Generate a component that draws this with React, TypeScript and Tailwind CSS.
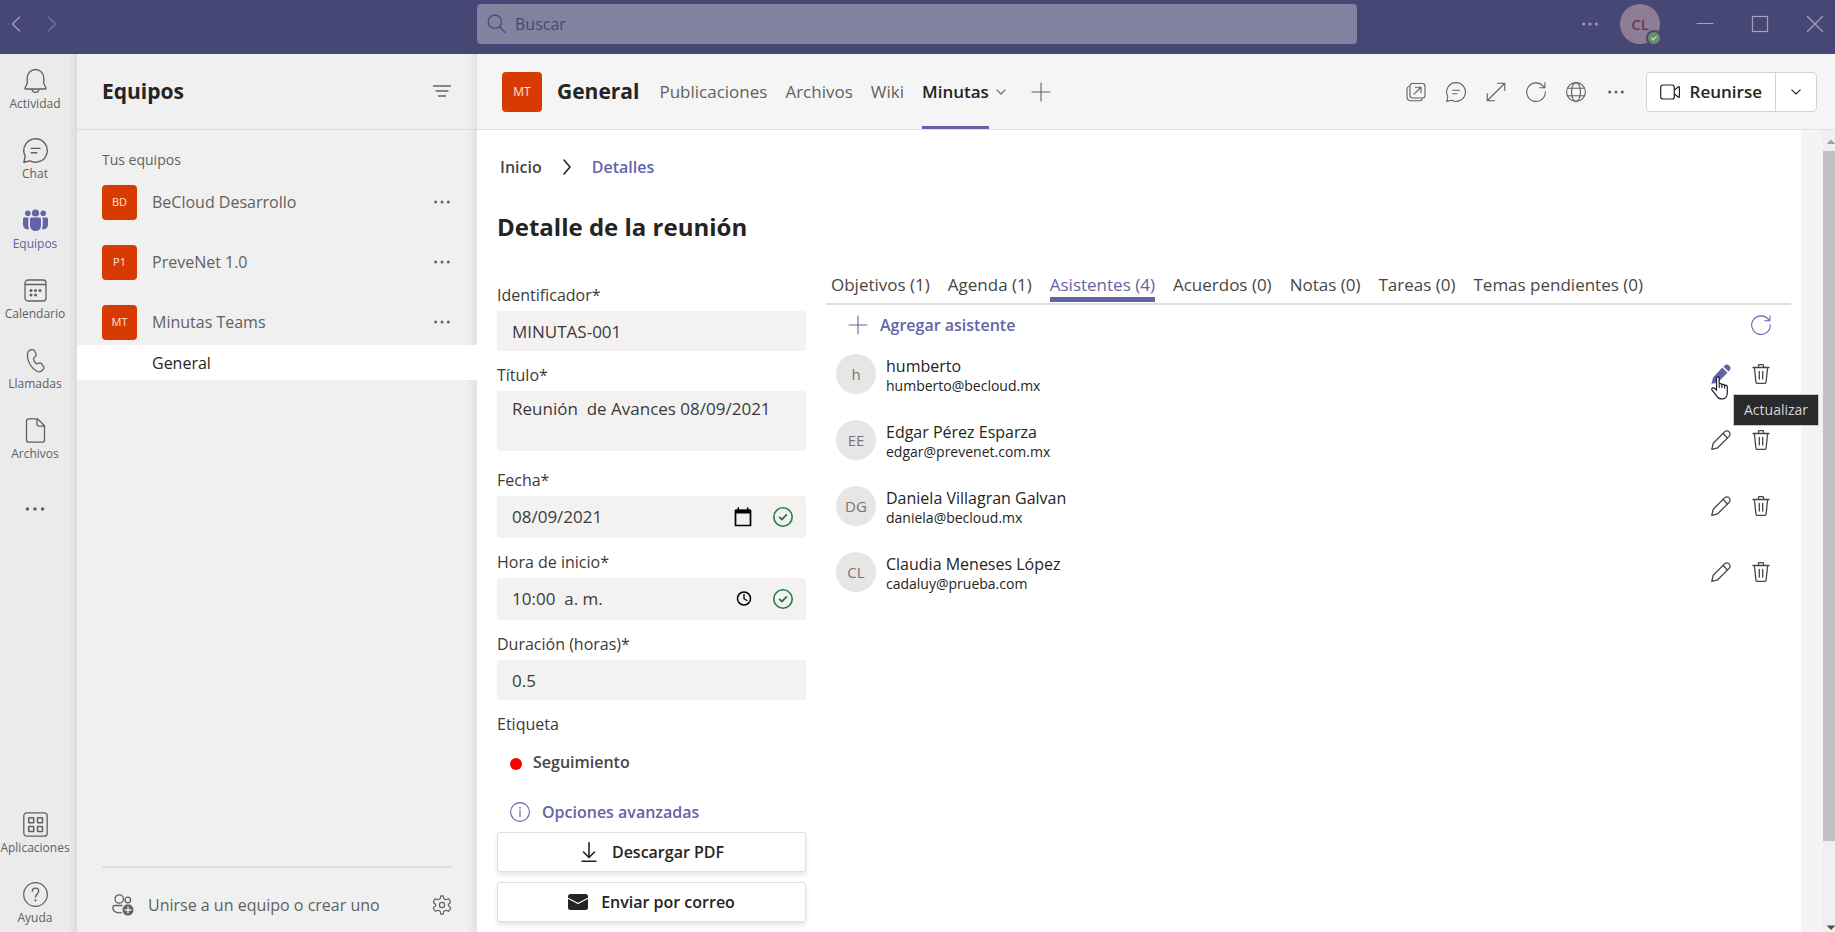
import { useState, type ReactNode } from "react";
import clsx from "clsx";

type IconProps = {
  children: ReactNode;
  className?: string;
  viewBox?: string;
};

const Icon = ({ children, className = "w-5 h-5", viewBox = "0 0 20 20" }: IconProps) => (
  <svg
    viewBox={viewBox}
    className={clsx("shrink-0", className)}
    fill="none"
    stroke="currentColor"
    strokeWidth="1.1"
    strokeLinecap="round"
    strokeLinejoin="round"
    aria-hidden="true"
  >
    {children}
  </svg>
);

const DotsIcon = ({ className = "w-5 h-5" }: { className?: string }) => (
  <Icon className={className}>
    <g fill="currentColor" stroke="none">
      <circle cx="3.7" cy="10" r="1.5" />
      <circle cx="10" cy="10" r="1.5" />
      <circle cx="16.3" cy="10" r="1.5" />
    </g>
  </Icon>
);

const ChevronDown = ({ className = "w-3 h-3" }: { className?: string }) => (
  <Icon className={className} viewBox="0 0 12 12">
    <path d="M1.8 3.8 6 8l4.2-4.2" />
  </Icon>
);

const ChatIcon = ({ className }: { className?: string }) => (
  <Icon className={className}>
    <path d="M10 .6a9.4 9.4 0 1 1-4.4 17.7L.7 19.4l1.1-4.9A9.4 9.4 0 0 1 10 .6Z" />
    <path d="M6.6 8.3h7M6.6 11.8h4.4" />
  </Icon>
);

const RefreshIcon = ({ className }: { className?: string }) => (
  <Icon className={className}>
    <path d="M19.3 9.7A9.3 9.3 0 1 1 17 4l1.8 1.6M18.9.8v5h-5.2" />
  </Icon>
);

const PlusIcon = ({ className }: { className?: string }) => (
  <Icon className={className}>
    <path d="M10 1v18M1 10h18" />
  </Icon>
);

const PencilIcon = () => (
  <Icon>
    <g strokeWidth="1.3">
      <path d="m2.2 13.3 11.4-11.4a3.1 3.1 0 0 1 4.5 4.5L6.7 17.8.8 19.4Z" />
      <path d="m12 3.5 4.5 4.5" />
    </g>
  </Icon>
);

const PencilFilledIcon = () => (
  <Icon>
    <g fill="currentColor" stroke="none">
      <path d="m11.3 3.6 5.1 5.1-9.1 9.2c-.3.3-.6.4-.9.5L.4 19.9l1.5-6c.1-.3.3-.6.5-.9Z" />
      <path d="m12.4 2.5.8-.8a3.6 3.6 0 0 1 5.1 5.1l-.8.8Z" />
    </g>
  </Icon>
);

const TrashIcon = () => (
  <Icon>
    <g strokeWidth="1.3">
      <path d="M2 3.5h16M7.500 3.300V1.500c0-.5.3-.9.9-.9h3.200c.6 0 .9.400.9.900v1.800" />
      <path d="m3.400 3.700 1.500 14.300c.1.900.7 1.500 1.600 1.500h7c.9 0 1.500-.6 1.600-1.500l1.500-14.300M8.300 7.500v7.500M11.700 7.500v7.500" />
    </g>
  </Icon>
);

const CheckCircleIcon = () => (
  <Icon className="w-5 h-5 text-[#237b4b]">
    <circle cx="10" cy="10" r="9.2" strokeWidth="1.6" />
    <path d="m6.6 10.3 2.3 2.2 4.5-4.6" strokeWidth="1.8" />
  </Icon>
);

const railIcons: Record<string, ReactNode> = {
  Actividad: (
    <Icon className="w-[25px] h-[25px]" viewBox="0 0 25 25">
      <path
        d="M12.500 1.500a8.300 8.300 0 0 0-8.300 8.300v5.700l-2.200 4.500c-.2.500.1 1 .6 1h19.800c.5 0 .8-.5.6-1l-2.200-4.500V9.800a8.300 8.300 0 0 0-8.300-8.300ZM8.900 21c.2 2 1.700 3.300 3.600 3.300s3.400-1.300 3.600-3.300"
        strokeWidth="1.3"
      />
    </Icon>
  ),
  Chat: <ChatIcon className="w-[25px] h-[25px]" />,
  Equipos: (
    <Icon className="w-[25px] h-[25px]" viewBox="0 0 25 25">
      <g fill="currentColor" stroke="none">
        <circle cx="12.5" cy="5" r="3.6" />
        <circle cx="4.8" cy="5.3" r="2.8" />
        <circle cx="20.2" cy="5.3" r="2.8" />
        <path d="M8.700 9.600h7.600c1 0 1.700.7 1.700 1.700v6.200a5.500 5.500 0 0 1-11 0v-6.200c0-1 .7-1.700 1.700-1.700Z" />
        <path d="M1.600 9.600h4.300c-.4.500-.6 1.100-.6 1.800v6.200c0 1.500.4 2.600 1 3.600-3.300.7-6.300-1-6.300-4.700v-5.300c0-1 .7-1.600 1.600-1.600ZM23.400 9.600h-4.300c.4.500.6 1.100.6 1.800v6.200c0 1.500-.4 2.600-1 3.600 3.300.7 6.300-1 6.300-4.700v-5.300c0-1-.7-1.600-1.600-1.600Z" />
      </g>
    </Icon>
  ),
  Calendario: (
    <Icon className="w-[25px] h-[25px]" viewBox="0 0 25 25">
      <path d="M2 6.500h21M5 2h15a3 3 0 0 1 3 3v15a3 3 0 0 1-3 3H5a3 3 0 0 1-3-3V5a3 3 0 0 1 3-3Z" strokeWidth="1.3" />
      <g fill="currentColor" stroke="none">
        <circle cx="8" cy="12.5" r="1.5" />
        <circle cx="12.5" cy="12.5" r="1.5" />
        <circle cx="17" cy="12.5" r="1.5" />
        <circle cx="8" cy="17" r="1.5" />
        <circle cx="12.5" cy="17" r="1.5" />
      </g>
    </Icon>
  ),
  Llamadas: (
    <Icon className="w-[25px] h-[25px]" viewBox="0 0 25 25">
      <path
        d="m6.500 1.200 1.700-.5a2.600 2.600 0 0 1 3.100 1.500l1.100 2.600c.4 1 .2 2.100-.6 2.800L9.900 9.400c.2 1.700 1.200 3.800 3 5.500l2.600-.8c1-.3 2 0 2.600.8l1.700 2.300c.8 1 .6 2.500-.3 3.300l-1.200 1.200c-1.200 1.100-3 1.500-4.500.8-5.900-2.700-9.900-10-9.900-16 .1-2.500.9-4.600 2.600-5.300Z"
        transform="translate(.5 1)"
        strokeWidth="1.3"
      />
    </Icon>
  ),
  Archivos: (
    <Icon className="w-[25px] h-[25px]" viewBox="0 0 25 25">
      <path
        d="M14.500.8H5.800a2.300 2.300 0 0 0-2.300 2.300v18.800a2.300 2.300 0 0 0 2.300 2.300h13.400a2.300 2.300 0 0 0 2.300-2.300V7.800ZM14 1v5.600c0 .9.600 1.500 1.500 1.500h5.700"
        strokeWidth="1.3"
      />
    </Icon>
  ),
  Aplicaciones: (
    <Icon className="w-[25px] h-[25px]" viewBox="0 0 25 25">
      <rect x=".8" y=".8" width="23.4" height="23.4" rx="3" strokeWidth="1.3" />
      <g strokeWidth="1.5">
        <rect x="5.7" y="5.7" width="5" height="5" rx=".5" />
        <rect x="14.5" y="5.7" width="5" height="5" rx=".5" />
        <rect x="5.7" y="14.5" width="5" height="5" rx=".5" />
        <rect x="14.5" y="14.5" width="5" height="5" rx=".5" />
      </g>
    </Icon>
  ),
  Ayuda: (
    <Icon className="w-[25px] h-[25px]" viewBox="0 0 25 25">
      <circle cx="12.5" cy="12.5" r="11.8" strokeWidth="1.3" />
      <path d="M9.300 9.300c0-2 1.400-3.200 3.200-3.200s3.200 1.300 3.200 3c0 2.600-3.200 3.100-3.200 6" strokeWidth="1.4" />
      <circle cx="12.5" cy="18.3" r="1.1" fill="currentColor" stroke="none" />
    </Icon>
  ),
};

const RailButton = ({ label, active }: { label: string; active?: boolean }) => (
  <button
    className={clsx(
      "w-[70px] h-[70px] pt-[14px] flex flex-col items-center text-[12px] leading-4",
      active ? "text-[#6264a7]" : "text-[#616161]"
    )}
  >
    {railIcons[label]}
    <span className="mt-[3px]">{label}</span>
  </button>
);

const AppRail = () => (
  <nav className="w-[77px] shrink-0 flex flex-col bg-[linear-gradient(to_left,#dcdcdc,#ebebeb_9px)]">
    {["Actividad", "Chat", "Equipos", "Calendario", "Llamadas", "Archivos"].map((label) => (
      <RailButton key={label} label={label} active={label === "Equipos"} />
    ))}
    <button aria-label="Más aplicaciones" className="w-[70px] h-[70px] flex items-center justify-center text-[#616161]">
      <DotsIcon className="w-6 h-6" />
    </button>
    <div className="mt-auto -mb-[6px]">
      <RailButton label="Aplicaciones" />
      <RailButton label="Ayuda" />
    </div>
  </nav>
);

const TitleBar = () => (
  <header className="h-[54px] shrink-0 flex items-start pt-1 bg-[#464775] text-[#a3a3bc]">
    <div className="w-[477px] h-10 shrink-0 flex items-center gap-4 pl-[6px]">
      <button aria-label="Atrás">
        <Icon>
          <path d="M13.500 3 6.500 10l7 7" strokeWidth="1.2" />
        </Icon>
      </button>
      <button aria-label="Adelante" className="text-[#77789b]">
        <Icon>
          <path d="m6.500 3 7 7-7 7" strokeWidth="1.2" />
        </Icon>
      </button>
    </div>
    <label className="flex-1 h-10 flex items-center gap-2 px-[10px] rounded bg-[#8281a0] text-[#464775]">
      <Icon>
        <circle cx="7.8" cy="7.8" r="6.6" strokeWidth="1.2" />
        <path d="m12.500 12.500 5.500 5.800" strokeWidth="1.2" />
      </Icon>
      <input
        type="search"
        aria-label="Buscar"
        placeholder="Buscar"
        className="flex-1 bg-transparent outline-none text-[16px] placeholder:text-[#464775]"
      />
    </label>
    <div className="w-[478px] h-10 shrink-0 flex items-center justify-end pr-[10px]">
      <button aria-label="Configuración y más" className="mr-5">
        <DotsIcon />
      </button>
      <button className="relative w-10 h-10 mr-[35px] rounded-full bg-[#8f7d98] text-[#6a3c58] text-[15px] font-semibold">
        CL
        <span className="absolute right-0 bottom-0 w-3 h-3 rounded-full bg-[#6b8e6f] ring-2 ring-[#464775] text-[#c5d0cc]">
          <Icon className="w-3 h-3" viewBox="0 0 14 14">
            <path d="m4.300 7.200 1.900 1.900 3.500-3.700" strokeWidth="1.5" />
          </Icon>
        </span>
      </button>
      <button aria-label="Minimizar" className="mr-[35px]">
        <Icon>
          <path d="M2 9.500h16" strokeWidth="1.2" />
        </Icon>
      </button>
      <button aria-label="Maximizar" className="mr-[35px]">
        <Icon>
          <rect x="2.5" y="2.5" width="15" height="15" strokeLinejoin="miter" strokeWidth="1.2" />
        </Icon>
      </button>
      <button aria-label="Cerrar">
        <Icon>
          <path d="m2.500 2.500 15 15M17.500 2.500l-15 15" strokeWidth="1.2" />
        </Icon>
      </button>
    </div>
  </header>
);

const teams = [
  { initials: "BD", name: "BeCloud Desarrollo" },
  { initials: "P1", name: "PreveNet 1.0" },
  { initials: "MT", name: "Minutas Teams" },
];

const TeamsPanel = () => (
  <aside className="w-[400px] shrink-0 flex flex-col text-[#616161] bg-[linear-gradient(to_left,#e2e2e2,#f0f0f0_10px)]">
    <div className="h-[76px] shrink-0 pl-[25px] pr-[25px] flex items-center justify-between border-b border-[#dcdcdc]">
      <h2 className="text-[21px] font-bold text-[#242424]">Equipos</h2>
      <button aria-label="Filtrar">
        <Icon className="w-5 h-5">
          <path d="M1.500 4h17M4 9h12M6.500 14h7" strokeWidth="1.3" />
        </Icon>
      </button>
    </div>
    <h3 className="mt-[18px] pl-[25px] text-[14px] leading-6">Tus equipos</h3>
    <ul>
      {teams.map((team) => (
        <li key={team.initials} className="h-[60px] pl-[25px] pr-[25px] flex items-center text-[16px]">
          <span className="w-[35px] h-[35px] mr-[15px] flex items-center justify-center rounded bg-[#d83b01] text-[#ffe3d9] text-[11px]">
            {team.initials}
          </span>
          <a href="#" className="flex-1">
            {team.name}
          </a>
          <button aria-label={`Más opciones de ${team.name}`}>
            <DotsIcon />
          </button>
        </li>
      ))}
    </ul>
    <a href="#" className="-mt-[7px] h-[35px] pl-[75px] flex items-center bg-white text-[16px] text-[#242424]">
      General
    </a>
    <div className="mt-auto mx-[25px] h-[66px] pl-[10px] pt-[10px] flex items-center border-t-2 border-[#e0e0e0]">
      <button className="flex items-center gap-[14px] text-[16px]">
        <Icon className="w-[22px] h-[22px]" viewBox="0 0 22 22">
          <circle cx="7.2" cy="5" r="4.2" strokeWidth="1.3" />
          <circle cx="15.8" cy="6" r="2.8" strokeWidth="1.3" />
          <path d="M10 11.500H2.500A1.800 1.800 0 0 0 .8 13.300c0 3.500 2.500 5.500 6.400 5.500l2-.1M13.500 11.500h5" strokeWidth="1.3" />
          <circle cx="16" cy="16" r="5.5" fill="currentColor" stroke="none" />
          <path d="M16 13v6M13 16h6" stroke="#f0f0f0" strokeWidth="1.3" />
        </Icon>
        Unirse a un equipo o crear uno
      </button>
      <button aria-label="Administrar equipos" className="ml-auto">
        <Icon className="w-5 h-5">
          <path
            d="M8.300 3.400 8.800.8h2.400l.5 2.600 2.100 1.300 2.700-1 1.900 2.600-.1 1.400-1.900 1.600v1.400l2 1.700.1 1.300-2 2.600-2.700-1-2.100 1.300-.5 2.600H8.800l-.5-2.600-2.100-1.300-2.700 1-2-2.600.1-1.300 2-1.700V9.300l-2-1.600-.1-1.400 2-2.600 2.700 1Z"
            strokeWidth="1.2"
          />
          <circle cx="10" cy="10" r="2.6" strokeWidth="1.2" />
        </Icon>
      </button>
    </div>
  </aside>
);

const ChannelHeader = () => (
  <div className="h-[76px] shrink-0 pl-[25px] pr-[18px] flex items-center border-b border-[#e1e1e1] bg-[#f5f5f5] text-[#616161]">
    <span className="w-10 h-10 flex items-center justify-center rounded bg-[#d83b01] text-[#ffe3d9] text-[12px]">MT</span>
    <h1 className="ml-[15px] text-[21px] font-bold text-[#242424]">General</h1>
    <nav className="ml-5 h-full flex items-center gap-[18px] text-[17px]">
      <a href="#">Publicaciones</a>
      <a href="#">Archivos</a>
      <a href="#">Wiki</a>
      <span className="h-full flex items-center gap-[6px]">
        <a
          href="#"
          aria-current="page"
          className="h-full pt-[3px] flex items-center border-b-[3px] border-[#6264a7] font-semibold text-[#242424]"
        >
          Minutas
        </a>
        <ChevronDown />
      </span>
    </nav>
    <button aria-label="Agregar pestaña" className="ml-6">
      <PlusIcon />
    </button>
    <div className="ml-auto flex items-center gap-5">
      <button aria-label="Abrir en ventana">
        <Icon>
          <rect x="4" y="1.5" width="15" height="14.5" rx="2.5" />
          <path d="M3 4.200C1.800 4.500 1 5.500 1 7v7.500C1 17 2.500 18.700 5 18.700h8.500c1.300 0 2.400-.5 3-1.700M8 12.200l6.700-6.700M9.500 5.300H15v5.500" />
        </Icon>
      </button>
      <button aria-label="Conversación">
        <ChatIcon />
      </button>
      <button aria-label="Expandir">
        <Icon>
          <path d="M1.500 18.500 18.500 1.500M11.500 1.200h7.300v7.300M1.200 11.500v7.300h7.300" />
        </Icon>
      </button>
      <button aria-label="Actualizar pestaña">
        <RefreshIcon />
      </button>
      <button aria-label="Ir al sitio web">
        <Icon>
          <circle cx="10" cy="10" r="9.4" />
          <ellipse cx="10" cy="10" rx="4.5" ry="9.4" />
          <path d="M1.500 6.300h17M1.500 13.700h17" />
        </Icon>
      </button>
      <button aria-label="Más opciones">
        <DotsIcon />
      </button>
    </div>
    <div className="ml-5 h-10 flex items-stretch rounded border border-[#d1d1d1] bg-white text-[#242424] text-[17px] font-semibold">
      <button className="px-[13px] flex items-center gap-[10px] border-r border-[#d1d1d1]">
        <Icon>
          <rect x=".7" y="3" width="13.6" height="14" rx="2.3" strokeWidth="1.2" />
          <path d="m14.500 8 4-3.200c.4-.3.900 0 .9.500v9.400c0 .5-.5.800-.9.500l-4-3.200" strokeWidth="1.2" />
        </Icon>
        Reunirse
      </button>
      <button aria-label="Opciones de reunión" className="w-10 flex items-center justify-center">
        <ChevronDown />
      </button>
    </div>
  </div>
);

const fieldClass = "w-full rounded-[3px] bg-[#f3f2f1] text-[17px] text-[#3b3a39] outline-none";

const MeetingForm = () => {
  const [title, setTitle] = useState("Reunión  de Avances 08/09/2021");

  return (
    <form className="w-[309px] shrink-0 pt-[10px] flex flex-col gap-3 text-[16px] leading-6 text-[#3b3a39]">
      <div>
        <label htmlFor="identificador">Identificador*</label>
        <input id="identificador" defaultValue="MINUTAS-001" className={clsx(fieldClass, "mt-1 h-10 px-[15px] block")} />
      </div>
      <div className="mb-[5px]">
        <label htmlFor="titulo">Título*</label>
        <textarea
          id="titulo"
          value={title}
          onChange={(e) => setTitle(e.target.value)}
          className={clsx(fieldClass, "mt-1 h-[60px] px-[15px] py-[6px] block resize-none")}
        />
      </div>
      <div>
        <label htmlFor="fecha">Fecha*</label>
        <div className={clsx(fieldClass, "mt-1 h-[42px] pl-[15px] pr-[13px] flex items-center")}>
          <input id="fecha" defaultValue="08/09/2021" className="flex-1 min-w-0 outline-none" />
          <button type="button" aria-label="Elegir fecha" className="mr-5 text-black">
            <Icon>
              <path d="M2.500 3.500h15v15h-15Z" strokeWidth="1.7" />
              <path d="M2.500 3h15v3h-15Z" fill="currentColor" />
              <path d="M5.300 1v2M14.700 1v2" strokeWidth="1.7" />
            </Icon>
          </button>
          <CheckCircleIcon />
        </div>
      </div>
      <div>
        <label htmlFor="hora">Hora de inicio*</label>
        <div className={clsx(fieldClass, "mt-1 h-[42px] pl-[15px] pr-[13px] flex items-center")}>
          <input id="hora" defaultValue="10:00  a. m." className="flex-1 min-w-0 outline-none" />
          <button type="button" aria-label="Elegir hora" className="mr-5 text-black">
            <Icon>
              <circle cx="11" cy="9.5" r="6.5" strokeWidth="1.5" />
              <path d="M11 5.500v4.200l3 1.800" strokeWidth="1.3" />
            </Icon>
          </button>
          <CheckCircleIcon />
        </div>
      </div>
      <div>
        <label htmlFor="duracion">Duración (horas)*</label>
        <input id="duracion" defaultValue="0.5" className={clsx(fieldClass, "mt-1 h-10 px-[15px] block")} />
      </div>
      <div>
        <span>Etiqueta</span>
        <div className="mt-[14px] pl-[13px] flex items-center gap-[11px] font-semibold text-[#484644]">
          <span className="w-3 h-3 mt-1 rounded-full bg-[#ff0000]" />
          Seguimiento
        </div>
      </div>
      <button type="button" className="mt-[14px] pl-[13px] flex items-center gap-3 font-semibold text-[#6264a7]">
        <Icon>
          <circle cx="10" cy="10" r="9.4" />
          <path d="M10 8.500v6" strokeWidth="1.2" />
          <circle cx="10" cy="5.8" r=".9" fill="currentColor" stroke="none" />
        </Icon>
        Opciones avanzadas
      </button>
      <div className="-mt-1 flex flex-col gap-[10px] font-semibold text-[#252423]">
        <button
          type="button"
          className="h-10 flex items-center justify-center gap-[13px] rounded-[3px] border border-[#e1dfdd] bg-white shadow-[0_3px_5px_rgba(0,0,0,0.1)]"
        >
          <Icon>
            <path d="M10 .8v14.500M4.500 10l5.500 5.500 5.500-5.500M3 19.200h14" strokeWidth="1.6" />
          </Icon>
          Descargar PDF
        </button>
        <button
          type="button"
          className="h-10 flex items-center justify-center gap-[13px] rounded-[3px] border border-[#e1dfdd] bg-white shadow-[0_3px_5px_rgba(0,0,0,0.1)]"
        >
          <Icon>
            <rect y="2" width="20" height="16" rx="2.5" fill="currentColor" stroke="none" />
            <path d="m.5 6.500 9.500 5 9.500-5" stroke="white" strokeWidth="1.2" />
          </Icon>
          Enviar por correo
        </button>
      </div>
    </form>
  );
};

const tabs = [
  "Objetivos (1)",
  "Agenda (1)",
  "Asistentes (4)",
  "Acuerdos (0)",
  "Notas (0)",
  "Tareas (0)",
  "Temas pendientes (0)",
];

const attendees = [
  { initials: "h", name: "humberto", email: "humberto@becloud.mx" },
  { initials: "EE", name: "Edgar Pérez Esparza", email: "edgar@prevenet.com.mx" },
  { initials: "DG", name: "Daniela Villagran Galvan", email: "daniela@becloud.mx" },
  { initials: "CL", name: "Claudia Meneses López", email: "cadaluy@prueba.com" },
];

const HandCursor = () => (
  <svg viewBox="0 0 18 24" className="absolute top-3 left-0 w-[18px] h-6" aria-hidden="true">
    <path
      d="M5.500 14V2.400c0-2 2.700-2 2.700 0v6c.4-1.200 2.600-1 2.700.5.600-1 2.500-.7 2.700.7.800-.8 2.700-.3 2.700 1.400v5.500c0 3.500-1.800 6.500-5.300 6.500-3 0-4.400-1.300-5.700-3.600L.9 13.900c-.8-1.700 1.200-2.900 2.500-1.600Z"
      fill="white"
      stroke="#1b1b2e"
      strokeWidth="1.2"
    />
    <path d="M8.200 8.500v3.500M10.900 9.200V12M13.600 10v2.500" stroke="#1b1b2e" strokeWidth="1.1" />
  </svg>
);

const Attendees = () => {
  const [activeTab, setActiveTab] = useState("Asistentes (4)");

  return (
    <section className="flex-1 min-w-0 text-[16px]">
      <div className="pl-[5px] flex gap-[18px] border-b-2 border-[#e1dfdd] text-[17px]">
        {tabs.map((tab) => (
          <button
            key={tab}
            onClick={() => setActiveTab(tab)}
            className={clsx(
              "mb-px border-b-[5px] leading-6 whitespace-nowrap",
              tab === activeTab ? "border-[#6264a7] text-[#6264a7]" : "border-transparent text-[#484644]"
            )}
          >
            {tab}
          </button>
        ))}
      </div>
      <div className="h-10 pl-[22px] pr-5 flex items-center justify-between text-[#6264a7]">
        <button className="flex items-center gap-3 font-semibold">
          <PlusIcon />
          Agregar asistente
        </button>
        <button aria-label="Recargar asistentes">
          <RefreshIcon />
        </button>
      </div>
      <ul className="pt-[9px] pl-[10px] pr-5 flex flex-col gap-[26px]">
        {attendees.map((person, index) => (
          <li key={person.email} className="h-10 flex items-center text-[#252423]">
            <span className="w-10 h-10 mr-[10px] flex items-center justify-center rounded-full bg-[#e6e6e6] text-[15px] text-[#767574]">
              {person.initials}
            </span>
            <div className="flex-1 min-w-0 pt-1">
              <p className="leading-5">{person.name}</p>
              <p className="text-[14px] leading-5">{person.email}</p>
            </div>
            <div className="flex items-center gap-5 text-[#484644]">
              <span className="relative">
                <button
                  aria-label={`Editar ${person.name}`}
                  className={clsx("block", index === 0 && "text-[#6264a7]")}
                >
                  {index === 0 ? <PencilFilledIcon /> : <PencilIcon />}
                </button>
                {index === 0 && (
                  <>
                    <HandCursor />
                    <span
                      role="tooltip"
                      className="absolute top-[30px] left-[22px] z-10 px-[10px] py-[3px] border border-[#c8c8c8] bg-[#292a2e] text-[14px] leading-6 text-[#d6d6d6]"
                    >
                      Actualizar
                    </span>
                  </>
                )}
              </span>
              <button aria-label={`Eliminar ${person.name}`}>
                <TrashIcon />
              </button>
            </div>
          </li>
        ))}
      </ul>
    </section>
  );
};

const ScrollBar = () => (
  <div className="w-[13px] shrink-0 pl-px flex flex-col bg-[#f0f0f0]" aria-hidden="true">
    <svg viewBox="0 0 12 21" className="w-3 h-[21px]">
      <path d="M3.500 14 8 9.500l4 4v.5Z" fill="#a3a3a3" />
    </svg>
    <div className="h-[690px] bg-[#c1c1c1]" />
    <svg viewBox="0 0 12 10" className="mt-auto w-3 h-[10px]">
      <path d="M3.500 3.500 8 8l4-4v-.5Z" fill="#505050" />
    </svg>
  </div>
);

export default function App() {
  return (
    <div className="h-screen flex flex-col overflow-hidden bg-white font-['Segoe_UI','Open_Sans',sans-serif]">
      <TitleBar />
      <div className="flex-1 min-h-0 flex">
        <AppRail />
        <TeamsPanel />
        <main className="flex-1 min-w-0 flex flex-col">
          <ChannelHeader />
          <div className="flex-1 min-h-0 flex">
            <div className="flex-1 min-w-0 pl-5 pr-[10px] pt-[25px]">
              <nav className="pl-[3px] flex items-center gap-[15px] text-[16px] leading-6 font-semibold text-[#484644]">
                <a href="#">Inicio</a>
                <Icon className="w-5 h-5 text-[#252423]">
                  <path d="m7 3 6 7-6 7" strokeWidth="1.6" />
                </Icon>
                <a href="#" className="text-[#6264a7]">
                  Detalles
                </a>
              </nav>
              <h2 className="mt-8 text-[24px] leading-8 font-bold text-[#252423]">Detalle de la reunión</h2>
              <div className="mt-[30px] flex gap-5">
                <MeetingForm />
                <Attendees />
              </div>
            </div>
            <div className="w-[21px] shrink-0 bg-[#f4f4f4]" />
            <ScrollBar />
          </div>
        </main>
      </div>
    </div>
  );
}
